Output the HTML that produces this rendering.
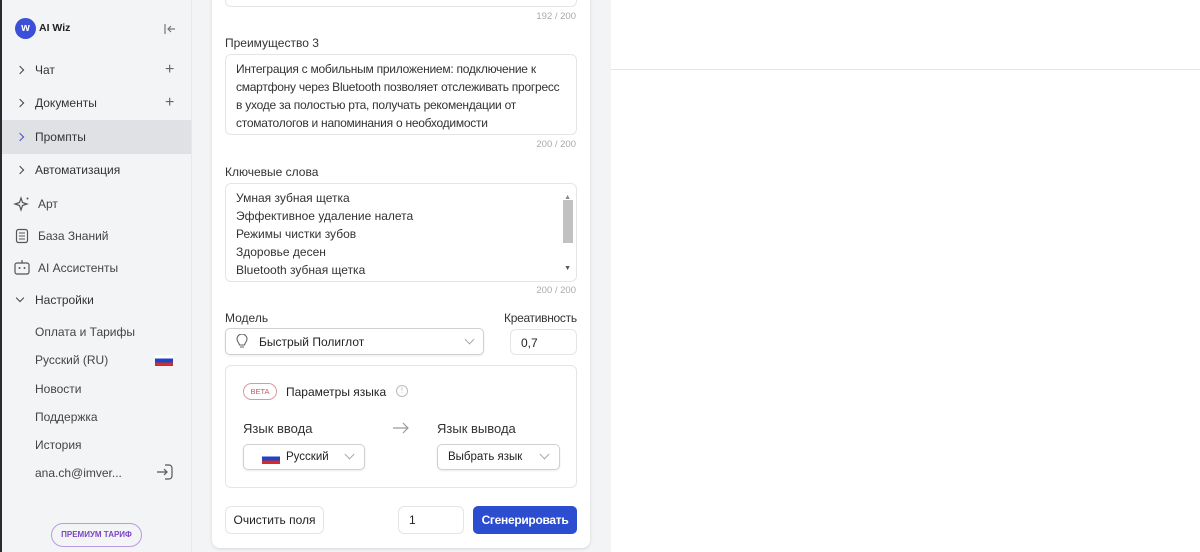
<!DOCTYPE html>
<html><head><meta charset="utf-8"><style>
*{box-sizing:border-box;margin:0;padding:0}
body{width:1200px;height:552px;overflow:hidden;background:#f3f4f6;font-family:"Liberation Sans","Noto Sans CJK SC",sans-serif;color:#222;position:relative;font-size:12px}
.abs{position:absolute}
.side{left:0;top:0;width:192px;height:552px;background:#f3f4f6;border-right:1px solid #e7e8ea}
.edge{left:0;top:0;width:2px;height:552px;background:#2a2a2a}
.nav{position:absolute;left:2px;width:189px;height:34px;display:flex;align-items:center;font-size:12px;color:#333}
.chev{position:absolute;left:15px;width:6px;height:6px;border-right:1.4px solid #444;border-top:1.4px solid #444;transform:rotate(45deg)}
.plus{position:absolute;left:163px;font-size:16px;color:#666;font-weight:300}
.sub{position:absolute;left:35px;font-size:12px;color:#444}
.card{left:212px;top:-10px;width:378px;height:558px;background:#fff;border-radius:8px;box-shadow:0 1px 3px rgba(0,0,0,.12)}
.lbl{position:absolute;font-size:12px;color:#333}
.box{position:absolute;border:1px solid #e4e5e8;border-radius:6px;background:#fff}
.cnt{position:absolute;font-size:9.5px;color:#aaa;right:14px}
.ta{font-size:12px;line-height:18px;color:#333}
.right{left:611px;top:0;width:589px;height:552px;background:#fff}
.sel{position:absolute;border:1px solid #cfd0d4;border-radius:5px;background:#fff;box-shadow:0 1px 2px rgba(0,0,0,.08)}
.dd{position:absolute;width:7px;height:7px;border-right:1px solid #aaa;border-bottom:1px solid #aaa;transform:rotate(45deg)}
.flag{position:absolute;width:18px;height:11px;background:linear-gradient(#fff 0 33%,#1e45c9 33% 66%,#d52b2b 66%)}
</style></head><body>
<div class="abs side">
 <div class="abs" style="left:15px;top:18px;width:21px;height:21px;border-radius:50%;background:#3b4fd8;color:#fff;font-size:11px;font-weight:bold;text-align:center;line-height:21px">w</div>
 <div class="abs" style="left:39px;top:22px;font-size:10.5px;font-weight:bold;color:#222">AI Wiz</div>
 <svg class="abs" style="left:163px;top:22px" width="14" height="14" viewBox="0 0 14 14"><path d="M2 2v10M12 7H5M8 4L5 7l3 3" stroke="#777" stroke-width="1.2" fill="none"/></svg>
 <div class="nav" style="top:53px"><span class="chev" style="top:14px"></span><span style="margin-left:33px">Чат</span><span class="plus">+</span></div>
 <div class="nav" style="top:86px"><span class="chev" style="top:14px"></span><span style="margin-left:33px">Документы</span><span class="plus">+</span></div>
 <div class="nav" style="top:120px;background:#e0e1e4"><span class="chev" style="top:14px;border-color:#4b4fc9"></span><span style="margin-left:33px">Промпты</span></div>
 <div class="nav" style="top:153px"><span class="chev" style="top:14px"></span><span style="margin-left:33px">Автоматизация</span></div>
 <svg class="abs" style="left:13px;top:195px" width="18" height="18" viewBox="0 0 18 18"><path d="M8 3l1.5 4.5L14 9l-4.5 1.5L8 15l-1.5-4.5L2 9l4.5-1.5z" stroke="#555" stroke-width="1.2" fill="none"/><circle cx="14.5" cy="3.5" r="1" fill="#555"/></svg>
 <div class="sub" style="top:197px;left:38px">Арт</div>
 <svg class="abs" style="left:15px;top:228px" width="14" height="16" viewBox="0 0 14 16"><rect x="1.5" y="1.5" width="11" height="13" rx="2" stroke="#555" stroke-width="1.2" fill="none"/><path d="M4 5h6M4 8h6M4 11h6" stroke="#555" stroke-width="1.1"/></svg>
 <div class="sub" style="top:229px;left:38px">База Знаний</div>
 <svg class="abs" style="left:13px;top:258px" width="18" height="18" viewBox="0 0 18 18"><rect x="2" y="5" width="14" height="11" rx="2" stroke="#555" stroke-width="1.2" fill="none"/><path d="M9 5V2" stroke="#555" stroke-width="1.2"/><circle cx="6.5" cy="10" r="1" fill="#555"/><circle cx="11.5" cy="10" r="1" fill="#555"/></svg>
 <div class="sub" style="top:261px;left:38px">AI Ассистенты</div>
 <div class="nav" style="top:283px"><span class="chev" style="top:12px;transform:rotate(135deg)"></span><span style="margin-left:33px">Настройки</span></div>
 <div class="sub" style="top:325px">Оплата и Тарифы</div>
 <div class="sub" style="top:353px">Русский (RU)</div>
 <div class="flag" style="left:155px;top:355px"></div>
 <div class="sub" style="top:382px">Новости</div>
 <div class="sub" style="top:410px">Поддержка</div>
 <div class="sub" style="top:438px">История</div>
 <div class="sub" style="top:466px">ana.ch@imver...</div>
 <svg class="abs" style="left:155px;top:462px" width="20" height="20" viewBox="0 0 20 20"><path d="M10 3h4a3 3 0 013 3v8a3 3 0 01-3 3h-4M2 10h10M9 7l3 3-3 3" stroke="#555" stroke-width="1.2" fill="none"/></svg>
 <div class="abs" style="left:51px;top:523px;width:91px;height:24px;border:1.5px solid #b89be0;border-radius:12px;color:#7b45c4;font-size:8px;font-weight:bold;text-align:center;line-height:21px">ПРЕМИУМ ТАРИФ</div>
</div>
<div class="abs edge"></div>
<div class="abs card">
 <div class="box" style="left:13px;top:0;width:352px;height:17px"></div>
 <div class="cnt" style="top:21px">192 / 200</div>
 <div class="lbl" style="left:13px;top:46px">Преимущество 3</div>
 <div class="box ta" style="left:13px;top:64px;width:352px;height:81px;padding:5px 8px 5px 10px;letter-spacing:-0.25px">Интеграция с мобильным приложением: подключение к смартфону через Bluetooth позволяет отслеживать прогресс в уходе за полостью рта, получать рекомендации от стоматологов и напоминания о необходимости</div>
 <div class="cnt" style="top:149px">200 / 200</div>
 <div class="lbl" style="left:13px;top:175px">Ключевые слова</div>
 <div class="box ta" style="left:13px;top:193px;width:352px;height:99px;padding:5px 10px">Умная зубная щетка<br>Эффективное удаление налета<br>Режимы чистки зубов<br>Здоровье десен<br>Bluetooth зубная щетка
  <div class="abs" style="right:3px;top:16px;width:10px;height:43px;background:#c1c1c1"></div>
  <div class="abs" style="right:5px;top:5px;font-size:7px;color:#888">▲</div>
  <div class="abs" style="right:5px;bottom:3px;font-size:7px;color:#555">▼</div>
 </div>
 <div class="cnt" style="top:295px">200 / 200</div>
 <div class="lbl" style="left:13px;top:321px">Модель</div>
 <div class="lbl" style="left:292px;top:321px;letter-spacing:-0.3px">Креативность</div>
 <div class="sel" style="left:13px;top:338px;width:259px;height:27px">
  <svg class="abs" style="left:9px;top:5px" width="14" height="16" viewBox="0 0 14 16"><path d="M4.5 11c0-2-2.5-3-2.5-6a5 5 0 0110 0c0 3-2.5 4-2.5 6zM5 13h4" stroke="#666" stroke-width="1.1" fill="none"/></svg>
  <div class="abs" style="left:33px;top:6px;font-size:12px;color:#222">Быстрый Полиглот</div>
  <div class="dd" style="left:240px;top:7px"></div>
 </div>
 <div class="box" style="left:298px;top:339px;width:67px;height:26px;padding:6px 10px;font-size:12px">0,7</div>
 <div class="box" style="left:13px;top:375px;width:352px;height:123px">
  <div class="abs" style="left:17px;top:17px;width:34px;height:17px;border:1px solid #d89b9b;border-radius:9px;color:#c06060;font-size:7.5px;text-align:center;line-height:15px">BETA</div>
  <div class="abs" style="left:60px;top:19px;font-size:12px;color:#222">Параметры языка</div>
  <div class="abs" style="left:170px;top:19px;width:12px;height:12px;border:1px solid #bbb;border-radius:50%;font-size:8px;color:#bbb;text-align:center;line-height:10px">!</div>
  <div class="abs" style="left:17px;top:55px;font-size:13px;color:#333">Язык ввода</div>
  <svg class="abs" style="left:166px;top:56px" width="18" height="12" viewBox="0 0 18 12"><path d="M1 6h15M11 1l5 5-5 5" stroke="#999" stroke-width="1.2" fill="none"/></svg>
  <div class="abs" style="left:211px;top:55px;font-size:13px;color:#333">Язык вывода</div>
  <div class="sel" style="left:17px;top:78px;width:122px;height:26px"><div class="flag" style="left:18px;top:8px"></div><div class="abs" style="left:42px;top:6px;font-size:11.5px">Русский</div><div class="dd" style="left:102px;top:6px"></div></div>
  <div class="sel" style="left:211px;top:78px;width:123px;height:26px"><div class="abs" style="left:10px;top:6px;font-size:11.5px">Выбрать язык</div><div class="dd" style="left:103px;top:6px"></div></div>
 </div>
 <div class="box" style="left:13px;top:516px;width:99px;height:28px;font-size:12px;text-align:center;line-height:26px">Очистить поля</div>
 <div class="box" style="left:186px;top:516px;width:66px;height:28px;padding:0 10px;font-size:12px;line-height:26px">1</div>
 <div class="abs" style="left:261px;top:516px;width:104px;height:28px;background:#2d4dd0;border-radius:5px;color:#fff;font-size:12px;font-weight:bold;text-align:center;line-height:28px;letter-spacing:-0.3px">Сгенерировать</div>
</div>
<div class="abs right"><div class="abs" style="left:0;top:69px;width:589px;height:1px;background:#e6e6e8"></div></div>
</body></html>
